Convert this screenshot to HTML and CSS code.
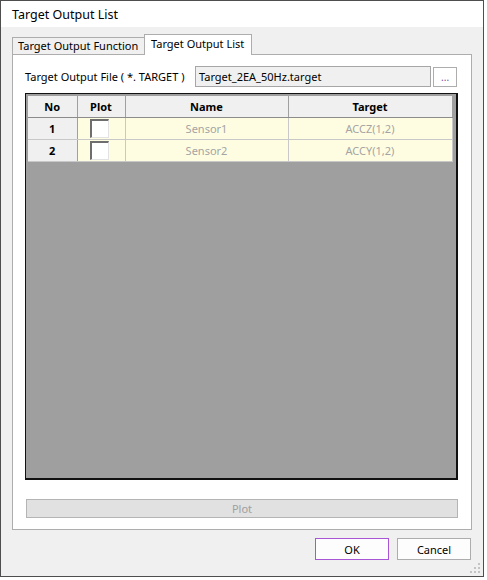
FILE: index.html
```html
<!DOCTYPE html>
<html>
<head>
<meta charset="utf-8">
<title>Target Output List</title>
<link rel="stylesheet" href="styles.css">
</head>
<body>
<div class="window">
  <div class="titlebar">Target Output List</div>
  <div class="client">
    <div class="tabs">
      <div class="tab">Target Output Function</div>
      <div class="tab active">Target Output List</div>
    </div>
    <div class="panel">
      <div class="file-row">
        <span class="file-label">Target Output File ( *. TARGET )</span>
        <div class="file-field">Target_2EA_50Hz.target</div>
        <button class="browse">...</button>
      </div>
      <div class="grid">
        <table class="grid-table">
          <colgroup>
            <col class="c-no"><col class="c-plot"><col class="c-name"><col class="c-target">
          </colgroup>
          <thead>
            <tr><th>No</th><th>Plot</th><th>Name</th><th>Target</th></tr>
          </thead>
          <tbody>
            <tr>
              <td class="row-no">1</td>
              <td class="plot"><span class="check"></span></td>
              <td class="dim">Sensor1</td>
              <td class="dim">ACCZ(1,2)</td>
            </tr>
            <tr>
              <td class="row-no">2</td>
              <td class="plot"><span class="check"></span></td>
              <td class="dim">Sensor2</td>
              <td class="dim">ACCY(1,2)</td>
            </tr>
          </tbody>
        </table>
      </div>
      <button class="plot-btn" disabled>Plot</button>
    </div>
    <div class="footer">
      <button class="btn default">OK</button>
      <button class="btn">Cancel</button>
    </div>
    <div class="grip">
      <svg width="10" height="10" viewBox="0 0 10 10">
        <g fill="#c4c4c4">
          <rect x="8" y="0" width="2" height="2"/>
          <rect x="4" y="4" width="2" height="2"/>
          <rect x="8" y="4" width="2" height="2"/>
          <rect x="0" y="8" width="2" height="2"/>
          <rect x="4" y="8" width="2" height="2"/>
          <rect x="8" y="8" width="2" height="2"/>
        </g>
      </svg>
    </div>
  </div>
</div>
</body>
</html>
```

FILE: styles.css
```css
* {
  box-sizing: border-box;
}

html, body {
  margin: 0;
  padding: 0;
  background: #ffffff;
}

body {
  width: 487px;
  height: 580px;
  font-family: "Noto Sans", "Open Sans", sans-serif;
  font-size: 11px;
  color: #000000;
}

.window {
  width: 484px;
  height: 577px;
  border: 1px solid #4e4e4e;
  background: #ffffff;
  display: flex;
  flex-direction: column;
}

.titlebar {
  height: 26px;
  flex: none;
  padding-left: 11px;
  font-size: 12.5px;
  line-height: 27px;
  color: #000000;
  background: #ffffff;
}

.client {
  position: relative;
  flex: 1;
  background: #f0f0f0;
  padding: 7px 12px 0 11px;
  display: flex;
  flex-direction: column;
}

/* tab strip */
.tabs {
  display: flex;
  align-items: flex-end;
  height: 20px;
  flex: none;
}

.tab {
  height: 17px;
  width: 133px;
  border: 1px solid #adadad;
  border-bottom: none;
  background: #f0f0f0;
  line-height: 16px;
  padding-left: 5px;
  white-space: nowrap;
}

.tab.active {
  position: relative;
  z-index: 1;
  height: 21px;
  width: 108px;
  margin-left: -1px;
  margin-bottom: -1px;
  background: #ffffff;
  padding-left: 6px;
  line-height: 18px;
}

/* tab page */
.panel {
  width: 460px;
  height: 476px;
  flex: none;
  border: 1px solid #adadad;
  background: #ffffff;
  padding: 11px 14px 0 12px;
  display: flex;
  flex-direction: column;
}

.file-row {
  display: flex;
  align-items: center;
  height: 21px;
}

.file-label {
  width: 170px;
  flex: none;
  white-space: nowrap;
}

.file-field {
  width: 238px;
  height: 21px;
  border: 1px solid #a6a6a6;
  background: #f0f0f0;
  padding-left: 3px;
  line-height: 19px;
}

.browse {
  width: 24px;
  height: 20px;
  margin-left: 2px;
  border: 1px solid #adadad;
  background: #ffffff;
  color: #7a4a9a;
  font-family: inherit;
  font-size: 10px;
  line-height: 14px;
  padding: 0;
}

/* data grid */
.grid {
  margin-top: 6px;
  width: 433px;
  height: 387px;
  border: 1px solid #111111;
  border-right-width: 2px;
  border-bottom-width: 2px;
  background: #9f9f9f;
  padding: 2px;
}

.grid-table {
  border-collapse: collapse;
  table-layout: fixed;
  width: 424px;
}

.c-no { width: 49px; }
.c-plot { width: 48px; }
.c-name { width: 163px; }
.c-target { width: 164px; }

.grid-table th {
  height: 21px;
  padding: 0;
  background: #f0f0f0;
  border-right: 1px solid #a0a0a0;
  border-bottom: 1px solid #8c8c8c;
  font-weight: bold;
  font-size: 11px;
  text-align: center;
}

.grid-table td {
  height: 22px;
  padding: 0;
  background: #fffde1;
  border-right: 1px solid #c8c8c8;
  border-bottom: 1px solid #c8c8c8;
  text-align: center;
}

.grid-table td.row-no {
  background: #f0f0f0;
  font-weight: bold;
  border-right-color: #a0a0a0;
}

.grid-table td.dim {
  color: #a4a4a4;
}

.grid-table td.plot {
  padding-left: 12px;
  text-align: left;
  vertical-align: middle;
}

.check {
  display: block;
  width: 19px;
  height: 19px;
  background: #ffffff;
  border-top: 2px solid #6e6e6e;
  border-left: 2px solid #6e6e6e;
  border-right: 1px solid #e3e3e3;
  border-bottom: 1px solid #e3e3e3;
}

.plot-btn {
  margin-top: 19px;
  margin-left: 1px;
  width: 432px;
  height: 19px;
  border: 1px solid #b4b4b4;
  background: #e1e1e1;
  color: #a0a0a0;
  font-family: inherit;
  font-size: 11px;
  padding: 0;
}

/* dialog buttons */
.footer {
  display: flex;
  justify-content: flex-end;
  gap: 8px;
  margin-top: 8px;
}

.btn {
  width: 74px;
  height: 22px;
  border: 1px solid #adadad;
  background: #fdfdfd;
  font-family: inherit;
  font-size: 11px;
  color: #000000;
  padding: 0;
}

.btn.default {
  border: 1px solid #a855d6;
}

.grip {
  position: absolute;
  right: 3px;
  bottom: 3px;
  width: 10px;
  height: 10px;
  line-height: 0;
}
```
